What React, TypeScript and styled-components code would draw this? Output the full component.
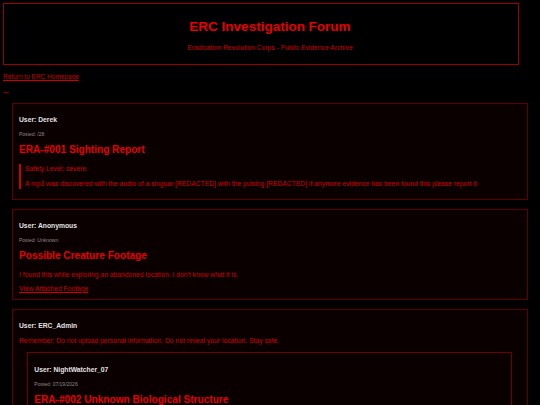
import React from "react";
import styled, { createGlobalStyle } from "styled-components";

const GlobalStyle = createGlobalStyle`
  html, body {
    margin: 0;
    padding: 0;
    background: #000;
  }
  body {
    font-family: "Liberation Sans", Arial, sans-serif;
    color: #cc0000;
  }
  * { box-sizing: border-box; }
`;

const Page = styled.div`
  padding: 3px 3px 20px;
  display: flex;
  flex-direction: column;
  align-items: flex-start;
`;

const Header = styled.header`
  width: 516px;
  height: 62px;
  padding-left: 18px;
  border: 1px solid #9a0000;
  background: #000;
  display: flex;
  flex-direction: column;
  align-items: center;
`;

const SiteTitle = styled.h1`
  margin: 15px 0 0;
  font-size: 13.5px;
  line-height: 16px;
  font-weight: bold;
  color: #e60000;
`;

const SiteSubtitle = styled.p`
  margin: 8.7px 0 0;
  font-size: 6.75px;
  line-height: 8px;
  color: #c80000;
`;

const HomeLink = styled.a`
  display: block;
  margin-top: 7px;
  font-size: 6.5px;
  line-height: 9px;
  color: #cc0000;
  text-decoration: underline;
`;

const Dots = styled.p`
  margin: 5px 0 0;
  font-size: 6.75px;
  line-height: 9px;
  font-weight: bold;
  color: #dd0000;
`;

const Feed = styled.div`
  margin-top: 8px;
  width: 100%;
  display: flex;
  flex-direction: column;
  gap: 9px;
`;

const Post = styled.article<{ $nested?: boolean }>`
  margin: ${(p) => (p.$nested ? "7.5px 8.6px 0 8.3px" : "0 9px")};
  padding: ${(p) => (p.$nested ? "7px 6px 6px" : "6px")};
  border: 1px solid ${(p) => (p.$nested ? "#700000" : "#5e0000")};
  background: #0b0000;
  display: flex;
  flex-direction: column;
  align-items: stretch;
`;

const UserName = styled.h4`
  margin: 5.2px 0 0;
  font-size: 6.75px;
  line-height: 9px;
  font-weight: bold;
  color: #e2e2e2;
`;

const Posted = styled.p`
  margin: 6.5px 0 0;
  font-size: 5px;
  line-height: 6px;
  color: #8a8a8a;
`;

const PostTitle = styled.h3`
  margin: 7.5px 0 0;
  font-size: 10.1px;
  line-height: 12px;
  font-weight: bold;
  color: #e60000;
`;

const Body = styled.p<{ $gap?: number }>`
  margin: ${(p) => p.$gap ?? 7.5}px 0 0;
  font-size: 6.75px;
  line-height: 9px;
  color: #d00000;
`;

const Quote = styled.blockquote`
  margin: 8px 0 4px;
  padding: 0 0 1px 4px;
  border-left: 2px solid #cc0000;
  display: flex;
  flex-direction: column;
`;

const QuoteLine = styled.p<{ $first?: boolean }>`
  margin: ${(p) => (p.$first ? 0 : 6)}px 0 0;
  font-size: 6.75px;
  line-height: 9px;
  color: #d00000;
`;

const FootageLink = styled.a`
  display: block;
  margin-top: 5px;
  font-size: 6.75px;
  line-height: 9px;
  color: #cc0000;
  text-decoration: underline;
`;

export default function App() {
  return (
    <>
      <GlobalStyle />
      <Page>
        <Header>
          <SiteTitle>ERC Investigation Forum</SiteTitle>
          <SiteSubtitle>Eradication Revolution Corps - Public Evidence Archive</SiteSubtitle>
        </Header>
        <HomeLink href="#">Return to ERC Homepage</HomeLink>
        <Dots>...</Dots>
        <Feed>
          <Post>
            <UserName>User: Derek</UserName>
            <Posted>Posted: /28</Posted>
            <PostTitle>ERA-#001 Sighting Report</PostTitle>
            <Quote>
              <QuoteLine $first>Safety Level: severe</QuoteLine>
              <QuoteLine>
                A mp3 was discovered with the audio of a singuar [REDACTED] with the pulsing [REDACTED] if anymore evidence has been found this please report it
              </QuoteLine>
            </Quote>
          </Post>
          <Post>
            <UserName>User: Anonymous</UserName>
            <Posted>Posted: Unknown</Posted>
            <PostTitle>Possible Creature Footage</PostTitle>
            <Body>I found this while exploring an abandoned location. I don't know what it is.</Body>
            <FootageLink href="#">View Attached Footage</FootageLink>
          </Post>
          <Post>
            <UserName>User: ERC_Admin</UserName>
            <Body $gap={5.6}>
              Remember: Do not upload personal information. Do not reveal your location. Stay safe.
            </Body>
            <Post $nested>
              <UserName>User: NightWatcher_07</UserName>
              <Posted>Posted: 07/19/2026</Posted>
              <PostTitle>ERA-#002 Unknown Biological Structure</PostTitle>
            </Post>
          </Post>
        </Feed>
      </Page>
    </>
  );
}
